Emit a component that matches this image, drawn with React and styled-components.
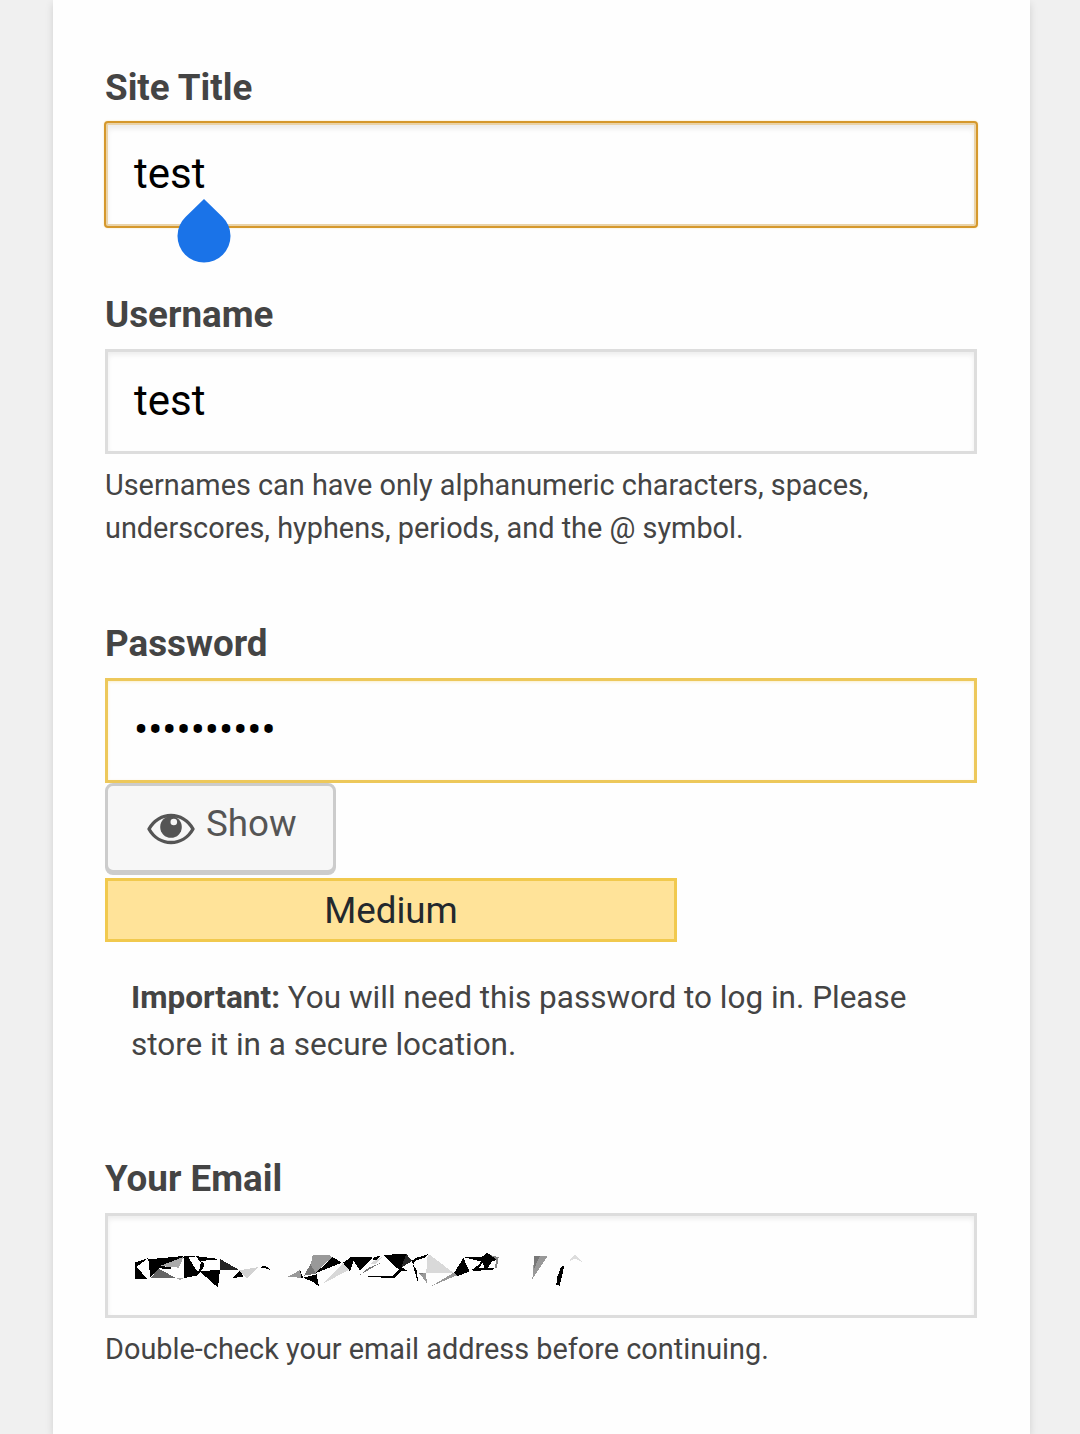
import React from "react";
import styled, { createGlobalStyle, css } from "styled-components";

const GlobalStyle = createGlobalStyle`
  * { box-sizing: border-box; }
  body {
    margin: 0;
    background: #f0f0f0;
    font-family: Roboto, "Liberation Sans", sans-serif;
    color: #444;
    overflow: hidden;
  }
`;

const Card = styled.main`
  width: 977px;
  height: 1434px;
  margin-left: 53px;
  padding: 62px 53px 0 52px;
  background: #fefefe;
  box-shadow: 0 3px 8px rgba(0, 0, 0, 0.13);
`;

const Field = styled.section`
  display: flex;
  flex-direction: column;
  align-items: flex-start;
  height: ${(p) => p.$height}px;
`;

const Label = styled.label`
  height: 60px;
  line-height: 51px;
  font-size: 36.75px;
  font-weight: 700;
  white-space: nowrap;
`;

const states = {
  normal: css`
    border-color: #ddd;
    box-shadow: inset 0 3px 5px rgba(0, 0, 0, 0.07);
  `,
  focus: css`
    border-color: #ead3a8;
    border-radius: 3px;
    outline: 2px solid #d5982c;
    outline-offset: -1px;
    box-shadow: 0 0 2px 1px #f7e3b4, inset 0 4px 5px rgba(0, 0, 0, 0.07);
  `,
  medium: css`
    border-color: #edc85b;
    box-shadow: inset 0 1px 3px rgba(240, 190, 60, 0.25);
  `,
};

const InputBox = styled.div`
  position: relative;
  display: flex;
  align-items: center;
  width: 872px;
  height: ${(p) => p.$height || 105}px;
  flex-shrink: 0;
  padding: 0 26px 2px;
  border: 3px solid;
  background: #fefefe;
  color: #000;
  font-size: 42px;
  line-height: 50px;
  ${(p) => states[p.$state || "normal"]}
`;

const Handle = styled.svg`
  position: absolute;
  left: 69px;
  top: 73px;
  width: 54px;
  height: 65px;
`;

const Hint = styled.p`
  margin: 10px 0 0;
  font-size: 28.875px;
  line-height: 43px;
  white-space: nowrap;
`;

const ShowButton = styled.button`
  display: flex;
  align-items: center;
  width: 231px;
  height: 90px;
  margin: 0;
  padding: 0 0 8px 39px;
  border: 3px solid #ccc;
  border-radius: 8px;
  background: #f7f7f7;
  box-shadow: 0 2px 0 #ccc;
  color: #555;
  font: 400 36.75px/44px Roboto, sans-serif;
`;

const Eye = styled.svg`
  width: 48px;
  height: 32px;
  margin: 10px 11px 0 0;
`;

const Strength = styled.div`
  width: 572px;
  height: 64px;
  margin-top: 5px;
  border: 3px solid #f1c94e;
  background: #ffe399;
  color: #23282d;
  font-size: 36.75px;
  line-height: 59px;
  text-align: center;
`;

const Notice = styled.p`
  margin: 32px 0 0 26px;
  font-size: 31.5px;
  line-height: 47px;
  white-space: nowrap;
`;

const Scramble = styled.svg`
  width: 480px;
  height: 65px;
  margin: 6px 0 0 -14px;
  flex-shrink: 0;
`;

function SelectionHandle() {
  return (
    <Handle viewBox="0 0 54 65">
      <path d="M27 1 L45.5 19 A26.5 26.5 0 1 1 8.5 19 Z" fill="#1a73e8" />
    </Handle>
  );
}

function EyeIcon() {
  return (
    <Eye viewBox="0 0 48 32">
      <path d="M2 16C12 -2 36 -2 46 16C36 34 12 34 2 16Z" fill="none" stroke="#555" strokeWidth="3.4" strokeLinejoin="round" />
      <circle cx="24" cy="14" r="10.8" fill="#555" />
      <circle cx="26.8" cy="9" r="3.3" fill="#f7f7f7" />
    </Eye>
  );
}

function ScrambledAddress() {
  return (
    <Scramble viewBox="0 0 1440 195" shapeRendering="crispEdges">
      <path fill="#000" d="M45 82L84 70L50 95L82 133H45ZM85 73L190 63L192 70L122 92L155 98L153 102L118 100L91 128ZM193 64H228L232 82L270 76H290V71L232 64L205 66L237 110L243 80L254 86L248 103L240 108L300 105L294 158L242 112L230 122L192 129ZM335 130L360 106L370 125ZM421 98L430 93L440 95L450 104L432 99Z" />
      <path fill="#fff" d="M206 69L232 110L242 83L231 67ZM240 78L298 73V104L247 108L255 85Z" />
      <path fill="#aaa" d="M120 93L190 66L177 98Z" />
      <path fill="#666" d="M117 101L165 128L91 129Z" />
      <path fill="#252525" d="M300 72L358 105H300Z" />
      <path fill="#d2d2d2" d="M357 106L416 96L381 129Z" />
      <path fill="#aaa" d="M169 130H189L181 136Z" />

      <g transform="translate(480 0)">
        <path fill="#999" d="M98 60H148L155 68L103 116L74 121L91 94ZM23 125L61 105L67 129Z" />
        <path fill="#777" d="M91 87L108 116L73 122Z" />
        <path fill="#000" d="M106 115L158 66L185 83ZM60 105L70 129L64 128ZM70 128L110 118L117 155L99 141ZM189 83L215 65L278 67L240 106L221 78L210 109ZM277 75L282 67L305 61L287 77ZM311 60L379 56L394 76L364 96L382 107L363 109L343 129L264 126V122L339 122L359 102L346 97ZM396 77L410 68L444 58L437 67L408 76L399 88L411 106L414 143L404 109Z" />
        <path fill="#d8d8d8" d="M130 145L188 85L207 105ZM270 85L306 66L285 88ZM443 58L480 85V113H440Z" />
        <path fill="#777" d="M238 121L265 99L303 83L269 103ZM418 115L437 116L440 143Z" />
        <path fill="#282828" d="M379 57L397 78L364 97Z" />
      </g>

      <g transform="translate(840 0)">
        <path fill="#d9d9d9" d="M86 57L160 113H78Z" />
        <path fill="#999" d="M95 153L161 113L171 121ZM59 116L77 115L82 146ZM403 62H444L397 132Z" />
        <path fill="#777" d="M403 62H420L402 102Z" />
        <path fill="#000" d="M163 113L190 69L209 109L174 123ZM190 66L247 65L261 53L294 73L276 80L263 99L282 98L280 104L219 108L217 103L239 88L242 79ZM482 98L493 91L488 114L479 152L469 149L472 126Z" />
        <path fill="#fff" d="M203 72L239 82L218 103ZM247 84L255 97L236 101Z" />
        <path fill="#888" d="M273 61L296 66L290 100L285 97L289 74Z" />
        <path fill="#ddd" d="M506 80L524 58L550 83L525 70Z" />
      </g>
    </Scramble>
  );
}

export default function App() {
  return (
    <>
      <GlobalStyle />
      <Card>
        <Field $height={227}>
          <Label>Site Title</Label>
          <InputBox $state="focus">
            test
            <SelectionHandle />
          </InputBox>
        </Field>
        <Field $height={329}>
          <Label>Username</Label>
          <InputBox>test</InputBox>
          <Hint>
            Usernames can have only alphanumeric characters, spaces,
            <br />
            underscores, hyphens, periods, and the @ symbol.
          </Hint>
        </Field>
        <Field $height={535}>
          <Label>Password</Label>
          <InputBox $state="medium">••••••••••</InputBox>
          <ShowButton type="button">
            <EyeIcon />
            Show
          </ShowButton>
          <Strength>Medium</Strength>
          <Notice>
            <b>Important:</b> You will need this password to log in. Please
            <br />
            store it in a secure location.
          </Notice>
        </Field>
        <Field $height={220}>
          <Label>Your Email</Label>
          <InputBox>
            <ScrambledAddress />
          </InputBox>
          <Hint>Double-check your email address before continuing.</Hint>
        </Field>
      </Card>
    </>
  );
}
